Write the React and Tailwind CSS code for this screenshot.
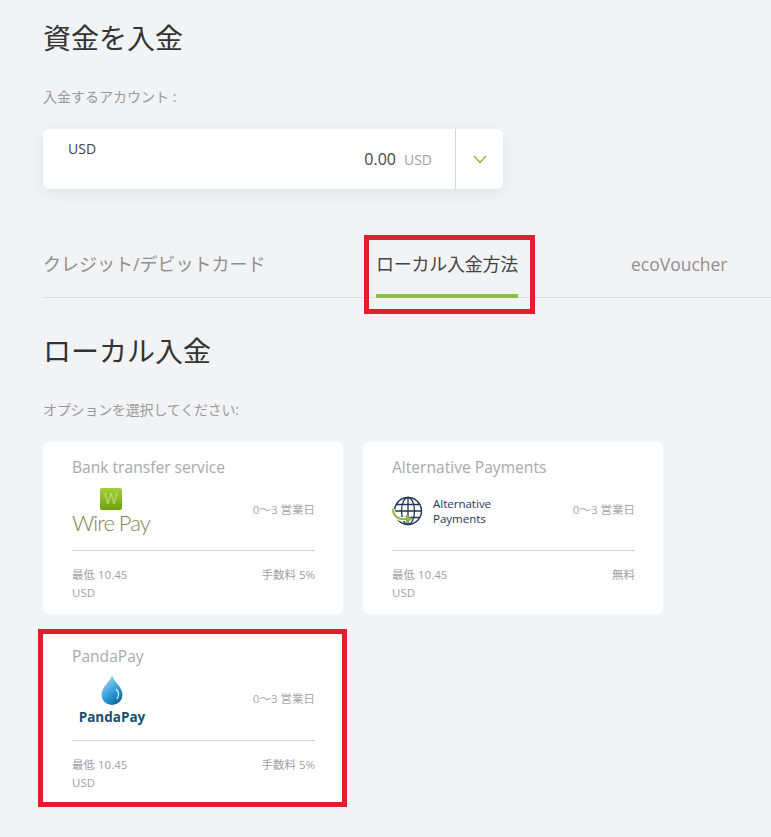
const font = { fontFamily: '"Open Sans","Noto Sans CJK JP",sans-serif' };

function WirePay() {
  return (
    <div className="flex flex-col items-start w-[80px] mt-[3px]">
      <div className="ml-[28px] w-[22px] h-[22px] rounded-[2px] bg-gradient-to-b from-[#a4cf3a] to-[#6fa008] flex items-center justify-center text-[15px] leading-none font-light text-[#d4e79a]">
        W
      </div>
      <div className="text-[22px] leading-[25px] font-light tracking-[-1px] text-[#7d8450] whitespace-nowrap font-['Lato',sans-serif]">
        Wire Pay
      </div>
    </div>
  );
}

function AltPay() {
  return (
    <div className="flex items-center gap-[10px] mt-[3px]">
      <svg width="31" height="30" viewBox="0 0 31 30" fill="none">
        <circle cx="16" cy="15" r="13.5" stroke="#1f3556" strokeWidth="1.4" />
        <ellipse cx="16" cy="15" rx="6.5" ry="13.5" stroke="#1f3556" strokeWidth="1.3" />
        <path d="M16 1.5v27M4 8.5h24M2.5 15h27M4 21.5h24" stroke="#1f3556" strokeWidth="1.3" />
        <path d="M1.2 13c-.6 5 3 9.5 8 10h6" stroke="#ffffff" strokeWidth="4" fill="none" />
        <path d="M1.2 13c-.6 5 3 9.5 8 10h6" stroke="#8dbb45" strokeWidth="2.2" fill="none" />
        <path d="M14 18.5l6.5 4.5-6.5 4.5z" fill="#8dbb45" />
      </svg>
      <div className="text-[11.5px] leading-[15px] text-[#1f3556]">
        <div>Alternative</div>
        <div>Payments</div>
      </div>
    </div>
  );
}

function PandaLogo() {
  return (
    <div className="flex flex-col items-center w-[74px] ml-[3px] mt-[4px]">
      <svg width="22" height="30" viewBox="0 0 22 30">
        <defs>
          <linearGradient id="drop" x1="0.2" y1="0" x2="0.8" y2="1">
            <stop offset="0" stopColor="#b8dcf0" />
            <stop offset="0.55" stopColor="#2f9fdc" />
            <stop offset="1" stopColor="#0c5e9c" />
          </linearGradient>
        </defs>
        <path d="M11 0C12 6 21.5 12 21.5 19.5A10.5 10.5 0 0 1 .5 19.5C.5 12 10 6 11 0Z" fill="url(#drop)" />
        <path d="M15 14c3 3 3 7 1 10" stroke="#e6f5fc" strokeWidth="1.2" fill="none" />
      </svg>
      <div className="mt-[2px] text-[13.5px] leading-[20px] font-bold text-[#14506f]">PandaPay</div>
    </div>
  );
}

function Card({ title, logo, fee, last }) {
  return (
    <div className={last ? "w-[300px] h-[172px] bg-white rounded-[6px] pl-[29px] pr-[28px] pt-[13px]" : "w-[300px] h-[172px] bg-white rounded-[6px] pl-[29px] pr-[28px] pt-[14px]"}>
      <div className="text-[15.6px] leading-[22px] text-[#a9a9a9] whitespace-nowrap">{title}</div>
      <div className={last ? "h-[74px] pb-[9px] flex items-center justify-between border-b border-[#d4d4d4]" : "h-[73px] pb-[9px] flex items-center justify-between border-b border-[#d4d4d4]"}>
        {logo}
        <div className="text-[11.5px] text-[#a9a9a9] whitespace-nowrap">0〜3 営業日</div>
      </div>
      <div className="pt-[15px] flex justify-between text-[11.5px] leading-[18px] text-[#a0a0a0]">
        <div>
          <div>最低 10.45</div>
          <div>USD</div>
        </div>
        <div>{fee}</div>
      </div>
    </div>
  );
}

export default function App() {
  return (
    <div style={font} className="relative w-[771px] h-[837px] overflow-hidden bg-[#f2f3f5] pl-[43px] pt-[18px]">
      <h1 className="text-[28px] leading-[40px] text-[#333333]">資金を入金</h1>
      <p className="mt-[29px] text-[14px] leading-[20px] text-[#9a9a9a]">入金するアカウント :</p>

      <div className="mt-[22px] w-[460px] h-[60px] bg-white rounded-[6px] shadow-[0_4px_16px_rgba(0,0,0,0.07)] flex">
        <div className="flex-1 relative flex items-center justify-end pr-[23px]">
          <span className="absolute left-[25px] top-[10px] text-[14px] leading-[20px] text-[#444444]">USD</span>
          <span className="text-[16px] text-[#444444]">0.00</span>
          <span className="ml-[8px] text-[14px] text-[#a0a0a0]">USD</span>
        </div>
        <div className="w-[48px] border-l border-[#d6d6d6] flex items-center justify-center">
          <svg width="14" height="9" viewBox="0 0 14 9" fill="none">
            <path d="M1 1l6 6.5L13 1" stroke="#96bb4d" strokeWidth="1.7" />
          </svg>
        </div>
      </div>

      <div className="mt-[61px] flex border-b border-[#dcdcdc] h-[48px] text-[18px] leading-[28px]">
        <div className="w-[221px] h-[48px] pb-[16px] text-[#8f8f8f] whitespace-nowrap">クレジット/デビットカード</div>
        <div className="ml-[112px] w-[142px] h-[48px] pb-[16px] border-b-4 border-[#8dbf45] text-[#444444] whitespace-nowrap tracking-[-0.25px]">ローカル入金方法</div>
        <div className="ml-[113px] h-[48px] pb-[16px] text-[#8f8f8f] font-medium text-[17.5px] whitespace-nowrap">ecoVoucher</div>
      </div>

      <h2 className="mt-[33px] text-[28px] leading-[40px] text-[#333333]">ローカル入金</h2>
      <p className="mt-[29px] text-[14px] leading-[20px] text-[#9a9a9a] tracking-[-0.2px]">オプションを選択してください:</p>

      <div className="mt-[22px] grid grid-cols-[300px_300px] gap-x-[20px] gap-y-[18px]">
        <Card title="Bank transfer service" logo={<WirePay />} fee="手数料 5%" />
        <Card title="Alternative Payments" logo={<AltPay />} fee="無料" />
        <Card title="PandaPay" logo={<PandaLogo />} fee="手数料 5%" last />
      </div>

      <div className="absolute left-[364px] top-[235px] w-[171px] h-[79px] border-[5px] border-[#e01f2d]" />
      <div className="absolute left-[38px] top-[629px] w-[309px] h-[178px] border-[5px] border-[#e01f2d]" />
    </div>
  );
}
